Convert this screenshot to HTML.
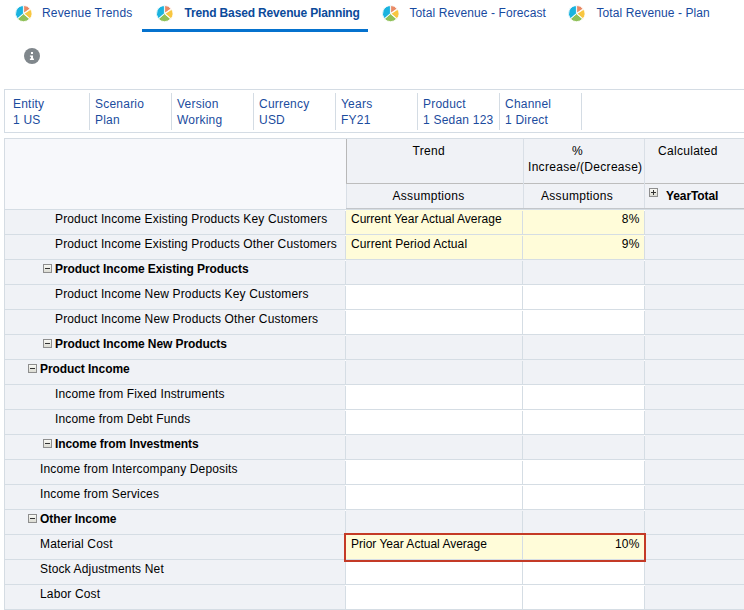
<!DOCTYPE html><html><head><meta charset="utf-8"><style>
*{margin:0;padding:0;box-sizing:content-box}
html,body{width:744px;height:610px;overflow:hidden;background:#fff}
body{position:relative;font-family:"Liberation Sans",sans-serif;font-size:12px}
.t{position:absolute;white-space:nowrap;line-height:16px;color:#000}
.ico{position:absolute;width:18px;height:18px}
.ico svg,.ico9 svg,.info svg{display:block}
.ico9{position:absolute;width:9px;height:9px}
.tab{color:#174aa0;font-size:12px;letter-spacing:0.1px}
.sel{color:#0b4a9a;font-weight:bold;letter-spacing:-0.15px}
.uline{position:absolute;left:142px;top:29px;width:226px;height:3px;background:#0572ce}
.info{position:absolute;left:24px;top:48px;width:16px;height:16px}
.pbar{position:absolute;left:4px;top:89px;width:760px;height:42px;border:1px solid #d4dce4}
.psep{position:absolute;top:93px;width:1px;height:37px;background:#d4dce4}
.pt{color:#1b4c9e;letter-spacing:0.22px}
.bx{position:absolute}
.ht{color:#000;letter-spacing:0.3px}
.ht.b{letter-spacing:-0.1px}
.rt{color:#000;letter-spacing:0.15px}
.rt.b{letter-spacing:-0.08px}
.yc{letter-spacing:0}
.b{font-weight:bold}
</style></head><body><div class="ico" style="left:15px;top:5px"><svg width="18" height="18" viewBox="0 0 18 18"><g stroke="#fff" stroke-width="0.85" stroke-linejoin="round"><path fill="#e98a66" d="M8.64 8.33L8.64 0.43A7.9 7.9 0 0 1 15.11 3.80Z"/><path fill="#f8c640" d="M9.00 8.63L15.62 4.33A7.9 7.9 0 0 1 15.05 13.71Z"/><path fill="#8fc058" d="M8.50 8.80L14.55 13.88A7.9 7.9 0 0 1 2.45 13.88Z"/><path fill="#1ab3df" d="M8.41 8.56L2.36 13.64A7.9 7.9 0 0 1 8.41 0.66Z"/></g></svg></div><div class="t tab" style="left:42px;top:5px;letter-spacing:0.17px">Revenue Trends</div><div class="ico" style="left:156px;top:5px"><svg width="18" height="18" viewBox="0 0 18 18"><g stroke="#fff" stroke-width="0.85" stroke-linejoin="round"><path fill="#e98a66" d="M8.64 8.33L8.64 0.43A7.9 7.9 0 0 1 15.11 3.80Z"/><path fill="#f8c640" d="M9.00 8.63L15.62 4.33A7.9 7.9 0 0 1 15.05 13.71Z"/><path fill="#8fc058" d="M8.50 8.80L14.55 13.88A7.9 7.9 0 0 1 2.45 13.88Z"/><path fill="#1ab3df" d="M8.41 8.56L2.36 13.64A7.9 7.9 0 0 1 8.41 0.66Z"/></g></svg></div><div class="t tab sel" style="left:184.5px;top:5px;">Trend Based Revenue Planning</div><div class="uline"></div><div class="ico" style="left:382px;top:5px"><svg width="18" height="18" viewBox="0 0 18 18"><g stroke="#fff" stroke-width="0.85" stroke-linejoin="round"><path fill="#e98a66" d="M8.64 8.33L8.64 0.43A7.9 7.9 0 0 1 15.11 3.80Z"/><path fill="#f8c640" d="M9.00 8.63L15.62 4.33A7.9 7.9 0 0 1 15.05 13.71Z"/><path fill="#8fc058" d="M8.50 8.80L14.55 13.88A7.9 7.9 0 0 1 2.45 13.88Z"/><path fill="#1ab3df" d="M8.41 8.56L2.36 13.64A7.9 7.9 0 0 1 8.41 0.66Z"/></g></svg></div><div class="t tab" style="left:409.5px;top:5px;">Total Revenue - Forecast</div><div class="ico" style="left:568px;top:5px"><svg width="18" height="18" viewBox="0 0 18 18"><g stroke="#fff" stroke-width="0.85" stroke-linejoin="round"><path fill="#e98a66" d="M8.64 8.33L8.64 0.43A7.9 7.9 0 0 1 15.11 3.80Z"/><path fill="#f8c640" d="M9.00 8.63L15.62 4.33A7.9 7.9 0 0 1 15.05 13.71Z"/><path fill="#8fc058" d="M8.50 8.80L14.55 13.88A7.9 7.9 0 0 1 2.45 13.88Z"/><path fill="#1ab3df" d="M8.41 8.56L2.36 13.64A7.9 7.9 0 0 1 8.41 0.66Z"/></g></svg></div><div class="t tab" style="left:596.5px;top:5px;">Total Revenue - Plan</div><div class="info"><svg width="16" height="16" viewBox="0 0 16 16"><circle cx="8" cy="8" r="8" fill="#80878c"/><rect x="7" y="4" width="2" height="2" fill="#fff"/><path fill="#fff" d="M5.9 7.6H9V10.5H9.9V12H5.9V10.5H7V8.8H5.9Z"/></svg></div><div class="pbar"></div><div class="t pt" style="left:13px;top:96px;">Entity<br>1 US</div><div class="psep" style="left:89px"></div><div class="t pt" style="left:95px;top:96px;">Scenario<br>Plan</div><div class="psep" style="left:171px"></div><div class="t pt" style="left:177px;top:96px;">Version<br>Working</div><div class="psep" style="left:253px"></div><div class="t pt" style="left:259px;top:96px;">Currency<br>USD</div><div class="psep" style="left:335px"></div><div class="t pt" style="left:341px;top:96px;">Years<br>FY21</div><div class="psep" style="left:417px"></div><div class="t pt" style="left:423px;top:96px;">Product<br>1 Sedan 123</div><div class="psep" style="left:499px"></div><div class="t pt" style="left:505px;top:96px;">Channel<br>1 Direct</div><div class="psep" style="left:581px"></div><div class="bx" style="left:5px;top:139px;width:341px;height:70px;background:#f7f8fb"></div><div class="bx" style="left:346px;top:139px;width:398px;height:70px;background:#f0f2f6"></div><div class="bx" style="left:4px;top:138px;width:740px;height:1px;background:#d5dce3"></div><div class="bx" style="left:4px;top:138px;width:1px;height:472px;background:#d5dce3"></div><div class="bx" style="left:346px;top:139px;width:1px;height:45px;background:#b8b8b8"></div><div class="bx" style="left:346px;top:183px;width:398px;height:1px;background:#bdbdbd"></div><div class="bx" style="left:346px;top:208px;width:398px;height:1px;background:#c3c6ca"></div><div class="bx" style="left:5px;top:209px;width:739px;height:1px;background:#d5dde4"></div><div class="bx" style="left:346px;top:184px;width:1px;height:24px;background:#d9dfe6"></div><div class="bx" style="left:523px;top:139px;width:1px;height:69px;background:#d9dfe6"></div><div class="bx" style="left:644px;top:139px;width:1px;height:69px;background:#d9dfe6"></div><div class="t ht" style="left:412.5px;top:143px;">Trend</div><div class="t ht" style="left:572px;top:143px;">%</div><div class="t ht" style="left:528px;top:159px;">Increase/(Decrease)</div><div class="t ht" style="left:658px;top:143px;">Calculated</div><div class="t ht" style="left:392.5px;top:188px;">Assumptions</div><div class="t ht" style="left:541px;top:188px;">Assumptions</div><div class="ico9" style="left:649px;top:188px"><svg width="9" height="9" viewBox="0 0 9 9"><rect x="0.5" y="0.5" width="8" height="8" fill="url(#gm)" stroke="#8e8e8e"/><rect x="2" y="4" width="5" height="1" fill="#333"/><rect x="4" y="2" width="1" height="5" fill="#333"/></svg></div><div class="t ht b" style="left:666px;top:188px;">YearTotal</div><div class="bx" style="left:5px;top:210px;width:340px;height:24px;background:#f0f2f6"></div><div class="bx" style="left:345px;top:211px;width:1px;height:23px;background:#d5dde4"></div><div class="bx" style="left:346px;top:210px;width:298px;height:24px;background:#fffcd9"></div><div class="bx" style="left:522px;top:211px;width:1px;height:23px;background:#d5dde4"></div><div class="bx" style="left:644px;top:211px;width:1px;height:23px;background:#d5dde4"></div><div class="bx" style="left:645px;top:210px;width:99px;height:24px;background:#f0f2f6"></div><div class="bx" style="left:5px;top:234px;width:739px;height:1px;background:#d5dde4"></div><div class="t rt" style="left:55px;top:211px;">Product Income Existing Products Key Customers</div><div class="t rt yc" style="left:351px;top:211px;">Current Year Actual Average</div><div class="t rt" style="right:104.5px;top:211px;text-align:right">8%</div><div class="bx" style="left:5px;top:235px;width:340px;height:24px;background:#f0f2f6"></div><div class="bx" style="left:345px;top:236px;width:1px;height:23px;background:#d5dde4"></div><div class="bx" style="left:346px;top:235px;width:298px;height:24px;background:#fffcd9"></div><div class="bx" style="left:522px;top:236px;width:1px;height:23px;background:#d5dde4"></div><div class="bx" style="left:644px;top:236px;width:1px;height:23px;background:#d5dde4"></div><div class="bx" style="left:645px;top:235px;width:99px;height:24px;background:#f0f2f6"></div><div class="bx" style="left:5px;top:259px;width:739px;height:1px;background:#d5dde4"></div><div class="t rt" style="left:55px;top:236px;">Product Income Existing Products Other Customers</div><div class="t rt yc" style="left:351px;top:236px;letter-spacing:0.1px">Current Period Actual</div><div class="t rt" style="right:104.5px;top:236px;text-align:right">9%</div><div class="bx" style="left:5px;top:260px;width:340px;height:24px;background:#f0f2f6"></div><div class="bx" style="left:345px;top:261px;width:1px;height:23px;background:#d5dde4"></div><div class="bx" style="left:346px;top:260px;width:298px;height:24px;background:#f0f2f6"></div><div class="bx" style="left:522px;top:261px;width:1px;height:23px;background:#d5dde4"></div><div class="bx" style="left:644px;top:261px;width:1px;height:23px;background:#d5dde4"></div><div class="bx" style="left:645px;top:260px;width:99px;height:24px;background:#f0f2f6"></div><div class="bx" style="left:5px;top:284px;width:739px;height:1px;background:#d5dde4"></div><div class="ico9" style="left:43px;top:264px"><svg width="9" height="9" viewBox="0 0 9 9"><defs><linearGradient id="gm" x1="0" y1="0" x2="0" y2="1"><stop offset="0" stop-color="#fbfbf7"/><stop offset="1" stop-color="#d9d9d0"/></linearGradient></defs><rect x="0.5" y="0.5" width="8" height="8" fill="url(#gm)" stroke="#8e8e8e"/><rect x="2" y="4" width="5" height="1" fill="#333"/></svg></div><div class="t rt b" style="left:55px;top:261px;">Product Income Existing Products</div><div class="bx" style="left:5px;top:285px;width:340px;height:24px;background:#f0f2f6"></div><div class="bx" style="left:345px;top:286px;width:1px;height:23px;background:#d5dde4"></div><div class="bx" style="left:346px;top:285px;width:298px;height:24px;background:#ffffff"></div><div class="bx" style="left:522px;top:286px;width:1px;height:23px;background:#d5dde4"></div><div class="bx" style="left:644px;top:286px;width:1px;height:23px;background:#d5dde4"></div><div class="bx" style="left:645px;top:285px;width:99px;height:24px;background:#f0f2f6"></div><div class="bx" style="left:5px;top:309px;width:739px;height:1px;background:#d5dde4"></div><div class="t rt" style="left:55px;top:286px;">Product Income New Products Key Customers</div><div class="bx" style="left:5px;top:310px;width:340px;height:24px;background:#f0f2f6"></div><div class="bx" style="left:345px;top:311px;width:1px;height:23px;background:#d5dde4"></div><div class="bx" style="left:346px;top:310px;width:298px;height:24px;background:#ffffff"></div><div class="bx" style="left:522px;top:311px;width:1px;height:23px;background:#d5dde4"></div><div class="bx" style="left:644px;top:311px;width:1px;height:23px;background:#d5dde4"></div><div class="bx" style="left:645px;top:310px;width:99px;height:24px;background:#f0f2f6"></div><div class="bx" style="left:5px;top:334px;width:739px;height:1px;background:#d5dde4"></div><div class="t rt" style="left:55px;top:311px;">Product Income New Products Other Customers</div><div class="bx" style="left:5px;top:335px;width:340px;height:24px;background:#f0f2f6"></div><div class="bx" style="left:345px;top:336px;width:1px;height:23px;background:#d5dde4"></div><div class="bx" style="left:346px;top:335px;width:298px;height:24px;background:#f0f2f6"></div><div class="bx" style="left:522px;top:336px;width:1px;height:23px;background:#d5dde4"></div><div class="bx" style="left:644px;top:336px;width:1px;height:23px;background:#d5dde4"></div><div class="bx" style="left:645px;top:335px;width:99px;height:24px;background:#f0f2f6"></div><div class="bx" style="left:5px;top:359px;width:739px;height:1px;background:#d5dde4"></div><div class="ico9" style="left:43px;top:339px"><svg width="9" height="9" viewBox="0 0 9 9"><defs><linearGradient id="gm" x1="0" y1="0" x2="0" y2="1"><stop offset="0" stop-color="#fbfbf7"/><stop offset="1" stop-color="#d9d9d0"/></linearGradient></defs><rect x="0.5" y="0.5" width="8" height="8" fill="url(#gm)" stroke="#8e8e8e"/><rect x="2" y="4" width="5" height="1" fill="#333"/></svg></div><div class="t rt b" style="left:55px;top:336px;">Product Income New Products</div><div class="bx" style="left:5px;top:360px;width:340px;height:24px;background:#f0f2f6"></div><div class="bx" style="left:345px;top:361px;width:1px;height:23px;background:#d5dde4"></div><div class="bx" style="left:346px;top:360px;width:298px;height:24px;background:#f0f2f6"></div><div class="bx" style="left:522px;top:361px;width:1px;height:23px;background:#d5dde4"></div><div class="bx" style="left:644px;top:361px;width:1px;height:23px;background:#d5dde4"></div><div class="bx" style="left:645px;top:360px;width:99px;height:24px;background:#f0f2f6"></div><div class="bx" style="left:5px;top:384px;width:739px;height:1px;background:#d5dde4"></div><div class="ico9" style="left:28px;top:364px"><svg width="9" height="9" viewBox="0 0 9 9"><defs><linearGradient id="gm" x1="0" y1="0" x2="0" y2="1"><stop offset="0" stop-color="#fbfbf7"/><stop offset="1" stop-color="#d9d9d0"/></linearGradient></defs><rect x="0.5" y="0.5" width="8" height="8" fill="url(#gm)" stroke="#8e8e8e"/><rect x="2" y="4" width="5" height="1" fill="#333"/></svg></div><div class="t rt b" style="left:40px;top:361px;">Product Income</div><div class="bx" style="left:5px;top:385px;width:340px;height:24px;background:#f0f2f6"></div><div class="bx" style="left:345px;top:386px;width:1px;height:23px;background:#d5dde4"></div><div class="bx" style="left:346px;top:385px;width:298px;height:24px;background:#ffffff"></div><div class="bx" style="left:522px;top:386px;width:1px;height:23px;background:#d5dde4"></div><div class="bx" style="left:644px;top:386px;width:1px;height:23px;background:#d5dde4"></div><div class="bx" style="left:645px;top:385px;width:99px;height:24px;background:#f0f2f6"></div><div class="bx" style="left:5px;top:409px;width:739px;height:1px;background:#d5dde4"></div><div class="t rt" style="left:55px;top:386px;">Income from Fixed Instruments</div><div class="bx" style="left:5px;top:410px;width:340px;height:24px;background:#f0f2f6"></div><div class="bx" style="left:345px;top:411px;width:1px;height:23px;background:#d5dde4"></div><div class="bx" style="left:346px;top:410px;width:298px;height:24px;background:#ffffff"></div><div class="bx" style="left:522px;top:411px;width:1px;height:23px;background:#d5dde4"></div><div class="bx" style="left:644px;top:411px;width:1px;height:23px;background:#d5dde4"></div><div class="bx" style="left:645px;top:410px;width:99px;height:24px;background:#f0f2f6"></div><div class="bx" style="left:5px;top:434px;width:739px;height:1px;background:#d5dde4"></div><div class="t rt" style="left:55px;top:411px;">Income from Debt Funds</div><div class="bx" style="left:5px;top:435px;width:340px;height:24px;background:#f0f2f6"></div><div class="bx" style="left:345px;top:436px;width:1px;height:23px;background:#d5dde4"></div><div class="bx" style="left:346px;top:435px;width:298px;height:24px;background:#f0f2f6"></div><div class="bx" style="left:522px;top:436px;width:1px;height:23px;background:#d5dde4"></div><div class="bx" style="left:644px;top:436px;width:1px;height:23px;background:#d5dde4"></div><div class="bx" style="left:645px;top:435px;width:99px;height:24px;background:#f0f2f6"></div><div class="bx" style="left:5px;top:459px;width:739px;height:1px;background:#d5dde4"></div><div class="ico9" style="left:43px;top:439px"><svg width="9" height="9" viewBox="0 0 9 9"><defs><linearGradient id="gm" x1="0" y1="0" x2="0" y2="1"><stop offset="0" stop-color="#fbfbf7"/><stop offset="1" stop-color="#d9d9d0"/></linearGradient></defs><rect x="0.5" y="0.5" width="8" height="8" fill="url(#gm)" stroke="#8e8e8e"/><rect x="2" y="4" width="5" height="1" fill="#333"/></svg></div><div class="t rt b" style="left:55px;top:436px;">Income from Investments</div><div class="bx" style="left:5px;top:460px;width:340px;height:24px;background:#f0f2f6"></div><div class="bx" style="left:345px;top:461px;width:1px;height:23px;background:#d5dde4"></div><div class="bx" style="left:346px;top:460px;width:298px;height:24px;background:#ffffff"></div><div class="bx" style="left:522px;top:461px;width:1px;height:23px;background:#d5dde4"></div><div class="bx" style="left:644px;top:461px;width:1px;height:23px;background:#d5dde4"></div><div class="bx" style="left:645px;top:460px;width:99px;height:24px;background:#f0f2f6"></div><div class="bx" style="left:5px;top:484px;width:739px;height:1px;background:#d5dde4"></div><div class="t rt" style="left:40px;top:461px;">Income from Intercompany Deposits</div><div class="bx" style="left:5px;top:485px;width:340px;height:24px;background:#f0f2f6"></div><div class="bx" style="left:345px;top:486px;width:1px;height:23px;background:#d5dde4"></div><div class="bx" style="left:346px;top:485px;width:298px;height:24px;background:#ffffff"></div><div class="bx" style="left:522px;top:486px;width:1px;height:23px;background:#d5dde4"></div><div class="bx" style="left:644px;top:486px;width:1px;height:23px;background:#d5dde4"></div><div class="bx" style="left:645px;top:485px;width:99px;height:24px;background:#f0f2f6"></div><div class="bx" style="left:5px;top:509px;width:739px;height:1px;background:#d5dde4"></div><div class="t rt" style="left:40px;top:486px;">Income from Services</div><div class="bx" style="left:5px;top:510px;width:340px;height:24px;background:#f0f2f6"></div><div class="bx" style="left:345px;top:511px;width:1px;height:23px;background:#d5dde4"></div><div class="bx" style="left:346px;top:510px;width:298px;height:24px;background:#f0f2f6"></div><div class="bx" style="left:522px;top:511px;width:1px;height:23px;background:#d5dde4"></div><div class="bx" style="left:644px;top:511px;width:1px;height:23px;background:#d5dde4"></div><div class="bx" style="left:645px;top:510px;width:99px;height:24px;background:#f0f2f6"></div><div class="bx" style="left:5px;top:534px;width:739px;height:1px;background:#d5dde4"></div><div class="ico9" style="left:28px;top:514px"><svg width="9" height="9" viewBox="0 0 9 9"><defs><linearGradient id="gm" x1="0" y1="0" x2="0" y2="1"><stop offset="0" stop-color="#fbfbf7"/><stop offset="1" stop-color="#d9d9d0"/></linearGradient></defs><rect x="0.5" y="0.5" width="8" height="8" fill="url(#gm)" stroke="#8e8e8e"/><rect x="2" y="4" width="5" height="1" fill="#333"/></svg></div><div class="t rt b" style="left:40px;top:511px;">Other Income</div><div class="bx" style="left:5px;top:535px;width:340px;height:24px;background:#f0f2f6"></div><div class="bx" style="left:345px;top:536px;width:1px;height:23px;background:#d5dde4"></div><div class="bx" style="left:346px;top:535px;width:298px;height:24px;background:#fffcd9"></div><div class="bx" style="left:522px;top:536px;width:1px;height:23px;background:#d5dde4"></div><div class="bx" style="left:644px;top:536px;width:1px;height:23px;background:#d5dde4"></div><div class="bx" style="left:645px;top:535px;width:99px;height:24px;background:#f0f2f6"></div><div class="bx" style="left:5px;top:559px;width:739px;height:1px;background:#d5dde4"></div><div class="t rt" style="left:40px;top:536px;">Material Cost</div><div class="t rt yc" style="left:351px;top:536px;">Prior Year Actual Average</div><div class="t rt" style="right:104.5px;top:536px;text-align:right">10%</div><div class="bx" style="left:5px;top:560px;width:340px;height:24px;background:#f0f2f6"></div><div class="bx" style="left:345px;top:561px;width:1px;height:23px;background:#d5dde4"></div><div class="bx" style="left:346px;top:560px;width:298px;height:24px;background:#ffffff"></div><div class="bx" style="left:522px;top:561px;width:1px;height:23px;background:#d5dde4"></div><div class="bx" style="left:644px;top:561px;width:1px;height:23px;background:#d5dde4"></div><div class="bx" style="left:645px;top:560px;width:99px;height:24px;background:#f0f2f6"></div><div class="bx" style="left:5px;top:584px;width:739px;height:1px;background:#d5dde4"></div><div class="t rt" style="left:40px;top:561px;">Stock Adjustments Net</div><div class="bx" style="left:5px;top:585px;width:340px;height:24px;background:#f0f2f6"></div><div class="bx" style="left:345px;top:586px;width:1px;height:23px;background:#d5dde4"></div><div class="bx" style="left:346px;top:585px;width:298px;height:24px;background:#ffffff"></div><div class="bx" style="left:522px;top:586px;width:1px;height:23px;background:#d5dde4"></div><div class="bx" style="left:644px;top:586px;width:1px;height:23px;background:#d5dde4"></div><div class="bx" style="left:645px;top:585px;width:99px;height:24px;background:#f0f2f6"></div><div class="bx" style="left:5px;top:609px;width:739px;height:1px;background:#d5dde4"></div><div class="t rt" style="left:40px;top:586px;">Labor Cost</div><div class="bx" style="left:344px;top:533px;width:298px;height:25px;border:2px solid #c43a26"></div></body></html>
